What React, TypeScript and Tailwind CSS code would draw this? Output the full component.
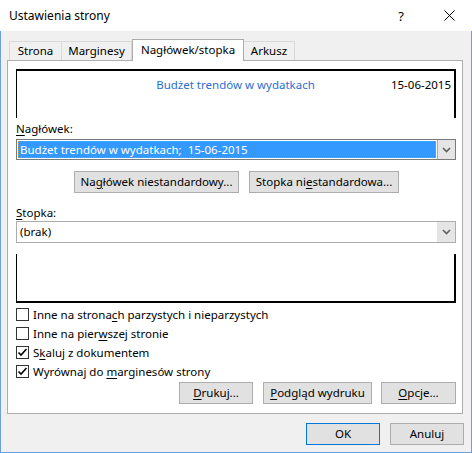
import React from "react";

const U = ({ children }: { children: React.ReactNode }) => (
  <span className="underline underline-offset-2 decoration-1">{children}</span>
);

const Btn = ({ children, w, primary }: { children: React.ReactNode; w: string; primary?: boolean }) => (
  <div
    className={`${w} shrink-0 h-[22px] flex items-center justify-center bg-[#e1e1e1] border ${
      primary ? "border-[#0078d7]" : "border-[#adadad]"
    } text-black whitespace-nowrap`}
  >
    {children}
  </div>
);

const Check = ({ checked, children }: { checked?: boolean; children: React.ReactNode }) => (
  <div className="h-[19px] flex items-center">
    <div className="w-[13px] h-[13px] border border-[#333333] bg-white flex items-center justify-center">
      {checked && (
        <svg width="11" height="11" viewBox="0 0 11 11">
          <path d="M1.5 5.5 L4 8 L9.5 2" stroke="#000" strokeWidth="1.6" fill="none" />
        </svg>
      )}
    </div>
    <span className="ml-[4px]">{children}</span>
  </div>
);

const Chevron = () => (
  <svg width="9" height="6" viewBox="0 0 9 6">
    <path d="M1 1 L4.5 4.5 L8 1" stroke="#606060" strokeWidth="1.6" fill="none" />
  </svg>
);

export default function App() {
  return (
    <div className="w-[472px] h-[453px] flex flex-col bg-[#f0f0f0] text-[11.5px] leading-[16px] text-black font-['Noto_Sans',sans-serif]">
      {/* title bar */}
      <div className="h-[31px] bg-white flex items-center shrink-0 text-[12px]">
        <span className="ml-[9px]">Ustawienia strony</span>
        <span className="ml-auto mr-[40px] text-[13px]">?</span>
        <svg width="11" height="11" viewBox="0 0 11 11" className="mr-[17px]">
          <path d="M0.5 0.5 L10.5 10.5 M10.5 0.5 L0.5 10.5" stroke="#000" strokeWidth="1" />
        </svg>
      </div>
      {/* body */}
      <div className="flex-1 border-l border-r border-b border-[#6f9fd8] flex flex-col">
        {/* tabs */}
        <div className="mt-[7px] ml-[8px] flex items-end h-[22px]">
          <div className="w-[53px] h-[19px] border border-b-0 border-[#d9d9d9] bg-[#f0f0f0] flex items-center justify-center">Strona</div>
          <div className="w-[70px] h-[19px] border border-l-0 border-b-0 border-[#d9d9d9] bg-[#f0f0f0] flex items-center justify-center">Marginesy</div>
          <div className="w-[112px] h-[22px] border border-b-0 border-[#adadad] bg-white flex items-center justify-center relative z-10 mb-[-1px] pb-[2px]">Nagłówek/stopka</div>
          <div className="w-[51px] h-[19px] border border-l-0 border-b-0 border-[#d9d9d9] bg-[#f0f0f0] flex items-center justify-center">Arkusz</div>
        </div>
        {/* panel */}
        <div className="ml-[6px] w-[456px] h-[354px] border border-[#adadad] bg-white flex flex-col pl-[8px] pr-[6px]">
          {/* header preview */}
          <div className="mt-[8px] h-[49px] border-t-2 border-l border-r-2 border-black relative">
            <span className="absolute left-0 right-0 top-[6px] text-center text-[#2b6fcf]">Budżet trendów w wydatkach</span>
            <span className="absolute right-[3px] top-[6px]">15-06-2015</span>
          </div>
          <div className="mt-[3px] h-[16px] leading-[16px]"><U>N</U>agłówek:</div>
          {/* header combo */}
          <div className="mt-[2px] h-[21px] border border-[#7a7a7a] flex">
            <div className="flex-1 p-[1px] flex">
              <div className="flex-1 bg-[#3399ff] text-white outline-1 outline-dotted outline-[#e08a30] -outline-offset-1 flex items-center pl-[2px]">
                Budżet trendów w wydatkach;&nbsp; 15-06-2015
              </div>
            </div>
            <div className="w-[18px] bg-[#e5e5e5] border-l border-[#adadad] flex items-center justify-center"><Chevron /></div>
          </div>
          {/* buttons */}
          <div className="mt-[11px] flex gap-[10px] pl-[58px]">
            <Btn w="w-[165px]">Na<U>g</U>łówek niestandardowy...</Btn>
            <Btn w="w-[150px]">Stopka ni<U>e</U>standardowa...</Btn>
          </div>
          <div className="mt-[12px] h-[16px]"><U>S</U>topka:</div>
          {/* footer combo */}
          <div className="mt-0 h-[22px] border border-[#adadad] flex">
            <div className="flex-1 flex items-center pl-[3px]">(brak)</div>
            <div className="w-[18px] bg-[#e5e5e5] flex items-center justify-center"><Chevron /></div>
          </div>
          {/* footer preview */}
          <div className="mt-[11px] h-[49px] border-l border-r-2 border-b-2 border-black" />
          {/* checkboxes */}
          <div className="mt-[2px] flex flex-col">
            <Check>Inne na strona<U>c</U>h parzystych i nieparzystych</Check>
            <Check>Inne na pier<U>w</U>szej stronie</Check>
            <Check checked>S<U>k</U>aluj z dokumentem</Check>
            <Check checked>Wyrównaj do <U>m</U>arginesów strony</Check>
          </div>
          <div className="mt-[1px] flex justify-end">
            <Btn w="w-[74px]"><U>D</U>rukuj...</Btn>
            <div className="w-[10px]" />
            <Btn w="w-[109px]"><U>P</U>odgląd wydruku</Btn>
            <div className="w-[9px]" />
            <Btn w="w-[75px]"><U>O</U>pcje...</Btn>
          </div>
        </div>
        {/* ok/cancel */}
        <div className="mt-[9px] flex justify-end gap-[10px] mr-[7px]">
          <Btn w="w-[74px]" primary>OK</Btn>
          <Btn w="w-[74px]">Anuluj</Btn>
        </div>
      </div>
    </div>
  );
}
